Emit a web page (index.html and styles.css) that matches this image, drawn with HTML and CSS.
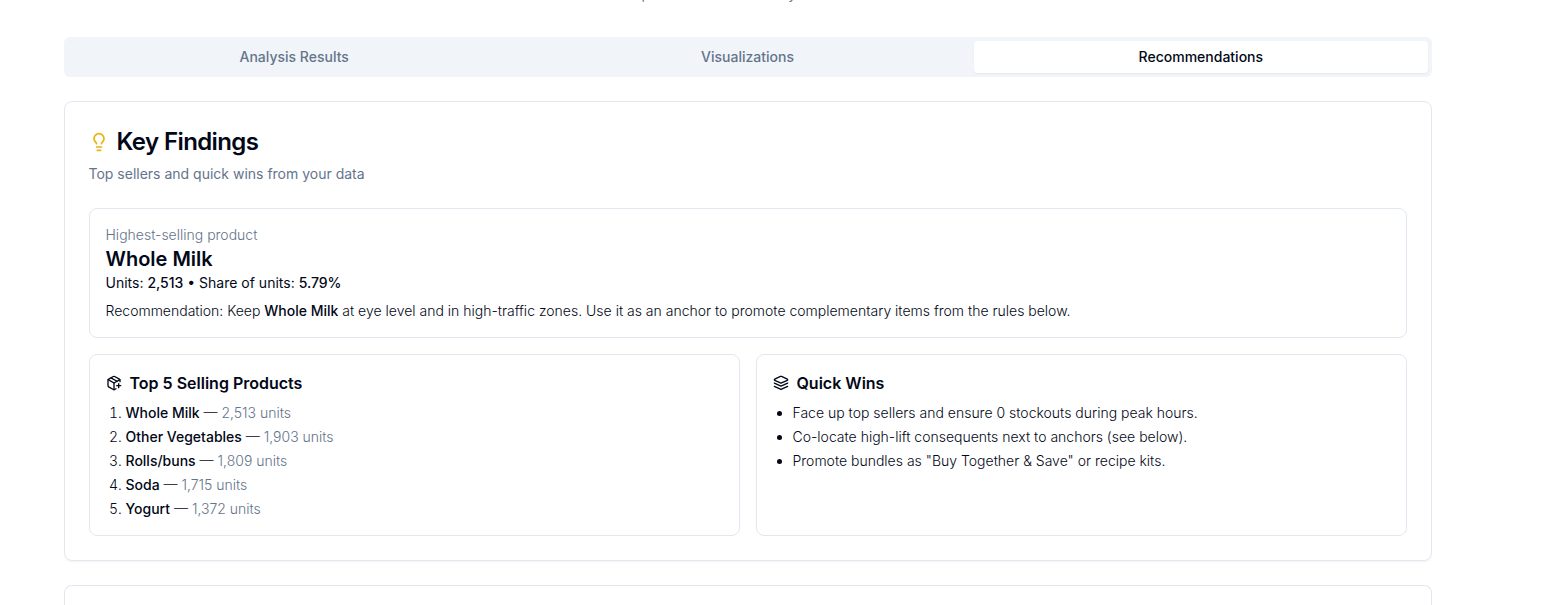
FILE: index.html
```html
<!DOCTYPE html>
<html lang="en"><head><meta charset="utf-8"><title>Recommendations</title><link rel="stylesheet" href="styles.css"></head>
<body>
<main class="page">
<p class="intro">Upload a file to run analysis on sales</p>
<nav class="tabs"><button class="tab">Analysis Results</button><button class="tab">Visualizations</button><button class="tab active">Recommendations</button></nav>
<section class="card">
<header class="card-head">
<h2 class="title"><svg class="icon bulb" viewBox="0 0 24 24"><path d="M15 14c.2-1 .7-1.7 1.5-2.5 1-.9 1.5-2.2 1.5-3.5A6 6 0 0 0 6 8c0 1 .2 2.2 1.5 3.5.7.7 1.3 1.5 1.5 2.5"/><path d="M9 18h6"/><path d="M10 22h4"/></svg>Key Findings</h2>
<p class="subtitle">Top sellers and quick wins from your data</p>
</header>
<div class="panel">
<div class="muted light">Highest-selling product</div>
<div class="product">Whole Milk</div>
<div class="stats">Units: <b>2,513</b> • Share of units: <b>5.79%</b></div>
<div class="advice light">Recommendation: Keep <b>Whole Milk</b> at eye level and in high-traffic zones. Use it as an anchor to promote complementary items from the rules below.</div>
</div>
<div class="columns">
<div class="panel">
<h3 class="heading"><svg class="icon" viewBox="0 0 24 24"><path d="M16 16h6"/><path d="M19 13v6"/><path d="M21 10V8a2 2 0 0 0-1-1.73l-7-4a2 2 0 0 0-2 0l-7 4A2 2 0 0 0 3 8v8a2 2 0 0 0 1 1.73l7 4a2 2 0 0 0 2 0l2-1.14"/><path d="m7.5 4.27 9 5.15"/><path d="M3.29 7 12 12l8.71-5"/><path d="M12 22V12"/></svg>Top 5 Selling Products</h3>
<ol class="list light">
<li><b>Whole Milk</b> — <span class="muted">2,513 units</span></li>
<li><b>Other Vegetables</b> — <span class="muted">1,903 units</span></li>
<li><b>Rolls/buns</b> — <span class="muted">1,809 units</span></li>
<li><b>Soda</b> — <span class="muted">1,715 units</span></li>
<li><b>Yogurt</b> — <span class="muted">1,372 units</span></li>
</ol>
</div>
<div class="panel">
<h3 class="heading"><svg class="icon" viewBox="0 0 24 24"><path d="m12.83 2.18a2 2 0 0 0-1.66 0L2.6 6.08a1 1 0 0 0 0 1.83l8.58 3.91a2 2 0 0 0 1.66 0l8.58-3.9a1 1 0 0 0 0-1.83Z"/><path d="m22 12.18-9.17 4.16a2 2 0 0 1-1.66 0L2 12.18"/><path d="m22 17.18-9.17 4.16a2 2 0 0 1-1.66 0L2 17.18"/></svg>Quick Wins</h3>
<ul class="list light">
<li>Face up top sellers and ensure 0 stockouts during peak hours.</li>
<li>Co-locate high-lift consequents next to anchors (see below).</li>
<li>Promote bundles as "Buy Together &amp; Save" or recipe kits.</li>
</ul>
</div>
</div>
</section>
<section class="card next"></section>
</main>
</body></html>
```
FILE: styles.css
```css
* { box-sizing: border-box; margin: 0; padding: 0; }
html { overflow: hidden; }
body { height: 605px; overflow: hidden; background: #fff; color: #020817; font: 14px/20px Inter, sans-serif; }
.page { width: 1368px; height: 605px; margin-left: 63.5px; overflow: hidden; display: flex; flex-direction: column; }
.intro { flex: none; height: 4px; margin-bottom: 33px; padding-left: 9px; line-height: 20px; color: #64748b; display: flex; align-items: flex-end; justify-content: center; }
.tabs { flex: none; display: grid; grid-template-columns: repeat(3, 1fr); height: 40px; padding: 4px; border-radius: 6px; background: #f1f5f9; }
.tab { border: 0; border-radius: 4px; background: none; color: #64748b; font: 500 14px/20px Inter, sans-serif; }
.tab.active { background: #fff; color: #020817; box-shadow: 0 1px 2px rgb(0 0 0 / .05); }
.card { flex: none; margin-top: 24px; padding: 24px; height: 460px; border: 1px solid #e2e8f0; border-radius: 8px; box-shadow: 0 1px 2px rgb(0 0 0 / .05); }
.card.next { flex: 1 1 0; height: auto; min-height: 0; padding: 0; border-bottom: 0; border-radius: 8px 8px 0 0; }
.title { display: flex; align-items: center; gap: 8px; height: 32px; font-size: 24px; line-height: 24px; font-weight: 600; letter-spacing: -.6px; }
.subtitle { margin-top: 6px; color: #64748b; }
.card-head { margin-bottom: 24px; }
.icon { width: 16px; height: 16px; flex: none; fill: none; stroke: currentColor; stroke-width: 2; stroke-linecap: round; stroke-linejoin: round; }
.bulb { width: 20px; height: 20px; color: #eab308; }
.panel { padding: 16px; border: 1px solid #e2e8f0; border-radius: 8px; }
.muted { color: #64748b; }
.light { font-weight: 300; }
b { font-weight: 500; }
.product { font-size: 20px; line-height: 28px; font-weight: 600; }
.advice { margin-top: 8px; }
.columns { display: grid; grid-template-columns: 1fr 1fr; gap: 16px; margin-top: 16px; }
.heading { display: flex; align-items: center; gap: 8px; font-size: 16px; line-height: 24px; font-weight: 600; margin-bottom: 8px; }
.list { padding-left: 20px; }
.list li + li { margin-top: 4px; }
```
